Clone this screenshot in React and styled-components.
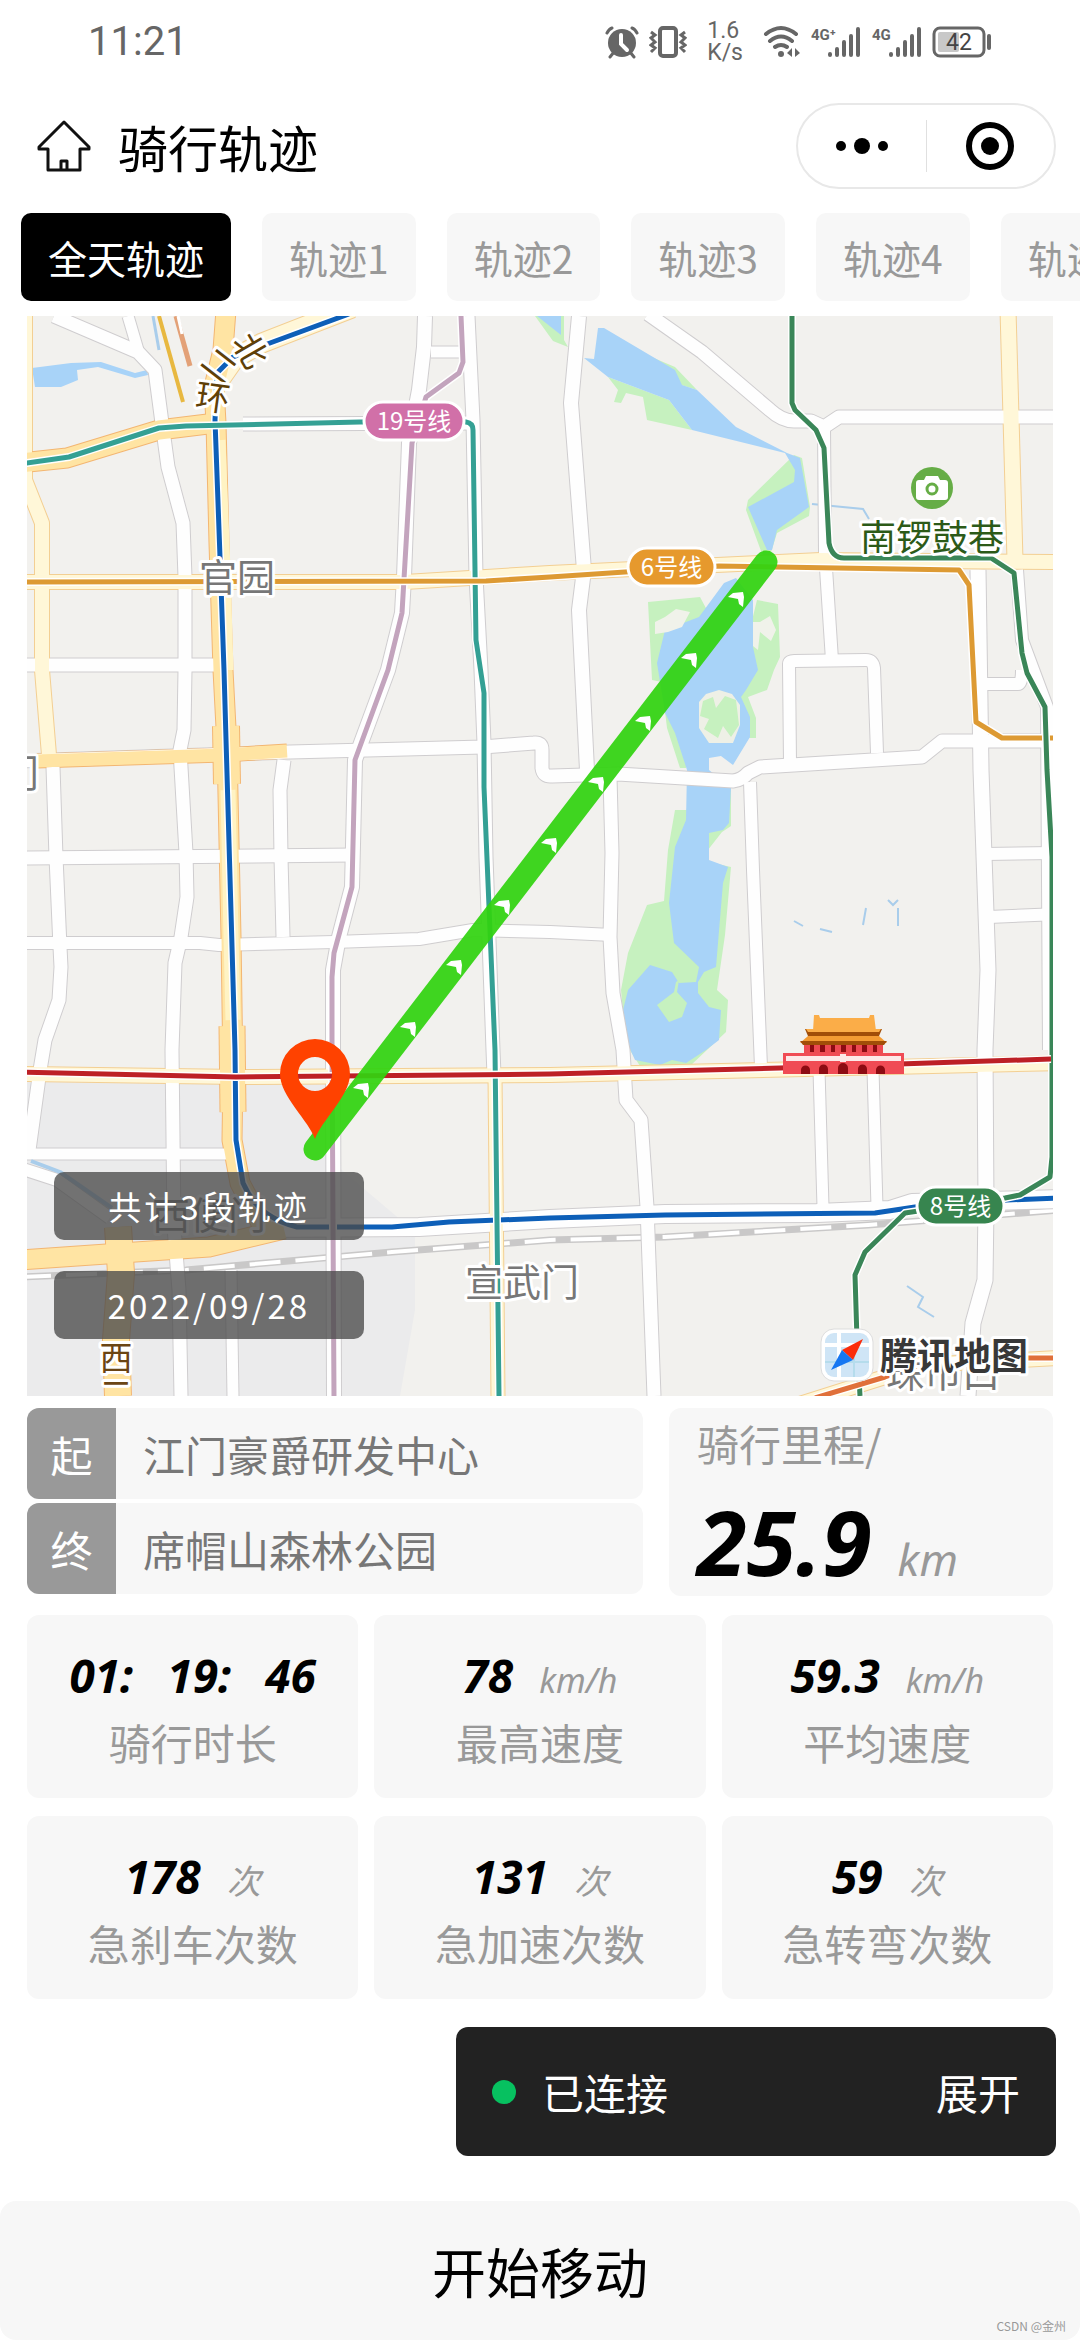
import React from "react";
import styled, { createGlobalStyle } from "styled-components";

const GlobalStyle = createGlobalStyle`
  *, *::before, *::after { box-sizing: border-box; }
  body {
    margin: 0;
    background: #fff;
    color: #000;
    font-family: "Noto Sans CJK SC", "Noto Sans", sans-serif;
  }
  button { font: inherit; color: inherit; border: 0; margin: 0; padding: 0; background: none; cursor: pointer; }
`;

const Page = styled.div`
  display: flex;
  flex-direction: column;
  min-height: 100vh;
  overflow: hidden;
`;

const StatusBar = styled.div`
  display: flex;
  justify-content: space-between;
  align-items: center;
  height: 84px;
  padding: 0 88px;
  color: #666;
  font-family: Roboto, sans-serif;
`;

const Clock = styled.time`
  font-size: 40px;
  line-height: 48px;
`;

const StatusIcons = styled.div`
  display: flex;
  align-items: center;
  gap: 10px;
`;

const Speed = styled.span`
  margin: 0 10px;
  font-size: 23px;
  line-height: 22px;
`;

const SignalGroup = styled.span`
  display: flex;
  gap: 11px;
`;

const Header = styled.header`
  display: flex;
  align-items: center;
  gap: 26px;
  height: 124px;
  padding: 0 24px 0 36px;
`;

const IconButton = styled.button`
  display: flex;
  align-items: center;
  justify-content: center;
  ${(p) => p.$grow && "flex: 1;"}
`;

const Title = styled.h1`
  flex: 1;
  margin: 0;
  font-size: 50px;
  font-weight: 400;
  line-height: 72px;
`;

const Capsule = styled.div`
  display: flex;
  align-items: center;
  width: 260px;
  height: 86px;
  border: 2px solid #e8e8e8;
  border-radius: 43px;
`;

const CapsuleDivider = styled.span`
  width: 1px;
  height: 52px;
  background: #e0e0e0;
`;

const Tabs = styled.nav`
  display: flex;
  gap: 31px;
  margin-top: 5px;
  padding-left: 21px;
  overflow: hidden;
`;

const Tab = styled.button`
  flex: none;
  height: 88px;
  padding: 0 27px;
  border-radius: 10px;
  font-size: 39px;
  line-height: 56px;
  color: ${(p) => (p.$active ? "#fff" : "#999")};
  background: ${(p) => (p.$active ? "#000" : "#f7f7f7")};
`;

const Content = styled.main`
  display: flex;
  flex-direction: column;
  margin-top: 15px;
  padding: 0 27px;
`;

const MapPanel = styled.section`
  position: relative;
`;

const MapCanvas = styled.svg`
  display: block;
  width: 100%;
  height: auto;
  background: #f2f1ee;
`;

const MapOverlay = styled.div`
  position: absolute;
  left: 27px;
  bottom: 57px;
  display: flex;
  flex-direction: column;
  gap: 31px;
  width: 310px;
`;

const MapTag = styled.div`
  height: 68px;
  border-radius: 10px;
  background: rgba(74, 74, 74, 0.78);
  color: #fff;
  font-size: 33px;
  line-height: 68px;
  letter-spacing: 3px;
  text-align: center;
`;

const Summary = styled.section`
  display: grid;
  grid-template-columns: 616fr 384fr;
  gap: 26px;
  margin-top: 12px;
`;

const Stops = styled.div`
  display: flex;
  flex-direction: column;
  gap: 4px;
`;

const Stop = styled.div`
  display: flex;
  align-items: center;
  height: 91px;
  border-radius: 12px;
  overflow: hidden;
  background: #f7f7f7;
  color: #777;
  font-size: 42px;
  line-height: 60px;
`;

const StopTag = styled.span`
  display: flex;
  align-items: center;
  justify-content: center;
  width: 89px;
  height: 100%;
  margin-right: 27px;
  background: #999;
  color: #fff;
`;

const Distance = styled.div`
  display: flex;
  flex-direction: column;
  justify-content: space-between;
  height: 188px;
  padding: 5px 28px 7px;
  border-radius: 12px;
  background: #f7f7f7;
  color: #999;
  font-size: 42px;
  line-height: 60px;
`;

const Reading = styled.div`
  display: flex;
  align-items: baseline;
  justify-content: ${(p) => (p.$large ? "flex-start" : "center")};
  gap: ${(p) => (p.$clock ? 34 : 26)}px;
  height: ${(p) => (p.$large ? 96 : 56)}px;
  line-height: ${(p) => (p.$large ? 96 : 56)}px;
  white-space: nowrap;
`;

const Value = styled.span`
  font-family: "Noto Sans", "Noto Sans CJK SC", sans-serif;
  font-size: ${(p) => (p.$large ? 90 : 46)}px;
  font-weight: 700;
  font-style: italic;
  color: #000;
`;

const Unit = styled.span`
  font-family: "Noto Sans", "Noto Sans CJK SC", sans-serif;
  font-size: ${(p) => (p.$large ? 44 : 34)}px;
  font-style: italic;
  color: #999;
`;

const Metrics = styled.section`
  display: grid;
  grid-template-columns: repeat(3, 1fr);
  gap: 18px 16px;
  margin-top: 19px;
`;

const Metric = styled.div`
  display: flex;
  flex-direction: column;
  gap: 11px;
  height: 183px;
  padding-top: 32px;
  border-radius: 12px;
  background: #f7f7f7;
`;

const MetricLabel = styled.div`
  color: #999;
  font-size: 42px;
  line-height: 56px;
  text-align: center;
`;

const Toast = styled.div`
  display: flex;
  align-items: center;
  align-self: flex-end;
  width: 600px;
  height: 129px;
  margin: 28px 24px 45px;
  padding: 0 36px;
  border-radius: 12px;
  background: #222;
  color: #fff;
  font-size: 42px;
  line-height: 60px;
`;

const Dot = styled.span`
  width: 24px;
  height: 24px;
  margin-right: 26px;
  border-radius: 50%;
  background: #07c160;
`;

const ToastText = styled.span`
  flex: 1;
`;

const Footer = styled.footer`
  position: relative;
  margin-top: auto;
`;

const StartButton = styled.button`
  display: block;
  width: 100%;
  height: 139px;
  border-radius: 16px;
  background: #f7f7f7;
  font-size: 54px;
  line-height: 76px;
`;

const Watermark = styled.small`
  position: absolute;
  right: 14px;
  bottom: 5px;
  color: #999;
  font-size: 12px;
  line-height: 18px;
`;

const MapText = styled.text`
  font-size: ${(p) => p.$size || 38}px;
  font-weight: ${(p) => (p.$bold ? 700 : 400)};
  fill: ${(p) => p.$fill || "#777"};
  stroke: ${(p) => (p.$plain ? "none" : "#fff")};
  stroke-width: 6px;
  stroke-linejoin: round;
  paint-order: stroke;
`;

const WHITE = ["#fefefe", "#cfcdcf"];
const CREAM = ["#fff7d8", "#f3cf93"];
const AMBER = ["#ffe4a3", "#f3b672"];

const ROADS = [
  ["M54 316L138 352L155 370L162 423L168 467L183 523L185 577V670L184 730L180 750L186 853L187 897L181 937L175 963L172 1050L174 1227L179 1290L181 1396", 13, WHITE],
  ["M128 316L138 350", 11, WHITE],
  ["M425 316L424 347L419 390L409 443L404 577L402 613L388 670L361 743L355 760L352 887L339 937L333 970V1050L334 1396", 14, WHITE],
  ["M468 316L473 420L476 577L481 670L484 743L486 857L493 1050L494 1075", 13, WHITE],
  ["M431 352H466", 11, WHITE],
  ["M243 424L473 423", 13, WHITE],
  ["M20 665H216", 13, WHITE],
  ["M20 761L290 752L483 747L534 743Q542 742 542 750V768Q543 777 552 776L618 774L733 781Q742 780 748 773L760 767L922 757L942 741H1060", 13, WHITE],
  ["M53 767L56 857L60 947L61 967L59 1000L45 1040L40 1070L29 1150", 13, WHITE],
  ["M20 858L355 855", 13, WHITE],
  ["M20 943H200L219 945L334 942L419 939L473 930L550 932L612 935", 12, WHITE],
  ["M284 760L280 790L281 857L283 937", 13, WHITE],
  ["M20 1154H226", 11, WHITE],
  ["M20 1168L57 1180L110 1218", 12, WHITE],
  ["M231 1270L233 1396", 11, WHITE],
  ["M579 316L571 403L584 570L579 610L582 670L587 770", 14, WHITE],
  ["M610 777L612 853L610 937L613 993L623 1050L626 1100L641 1120L647 1207L654 1396", 13, WHITE],
  ["M648 314L702 352L770 410Q782 421 794 421H811L824 427L839 417H1060", 13, WHITE],
  ["M824 427L825 553L832 660", 12, WHITE],
  ["M790 763L789 664Q789 661 794 661L866 660Q873 660 874 668L877 753", 12, WHITE],
  ["M750 782L753 870L761 1067", 12, WHITE],
  ["M978 570L981 770L988 970L985 1050L986 1207L985 1280L973 1323L968 1396", 15, WHITE],
  ["M1017 570L1022 640L1047 707L1049 1050", 12, WHITE],
  ["M985 684H1018Q1022 684 1022 670", 12, WHITE],
  ["M985 854L1060 853", 12, WHITE],
  ["M989 917L1060 914", 12, WHITE],
  ["M819 1070L823 1207", 11, WHITE],
  ["M873 1070L877 1207", 11, WHITE],
  ["M263 1228L419 1227L550 1219L665 1214L817 1213L890 1210L912 1203L1060 1199", 18, WHITE],
  ["M25 316V480L42 523V670L49 755", 14, CREAM],
  ["M20 582H405L550 573L821 560L1060 562", 14, CREAM],
  ["M1008 310L1015 560", 15, CREAM],
  ["M20 1074L240 1077L550 1075L1060 1063", 14, CREAM],
  ["M495 1075L498 1396", 13, CREAM],
  ["M790 1407L885 1377L919 1365L1060 1358", 14, CREAM],
  ["M221 378L235 358L262 343L352 308", 19, CREAM],
  ["M226 310L223 350L214 387L216 423L219 543L223 670L227 747L231 937L233 1073L232 1140L240 1183L263 1227", 19, AMBER],
  ["M226 726L227 784", 26, AMBER],
  ["M232 1026L233 1112", 25, AMBER],
  ["M20 463L67 458L159 430L216 423", 19, AMBER],
  ["M37 761L223 755L287 751", 13, AMBER],
  ["M20 1260L121 1253L209 1247L284 1229", 19, AMBER],
  ["M118 1227L121 1273L116 1340L118 1396", 26, AMBER],
];

const SUBWAYS = [
  ["M349 314L270 343L233 357L217 373L215 420L220 557L224 670L235 1050L236 1140L243 1183Q252 1203 266 1213T297 1227H392L449 1222L550 1218L665 1215L875 1213L915 1207L1007 1200L1060 1198", "#0d5fb8"],
  ["M20 464L69 457L159 428L186 426L360 422H466Q473 423 473 430L476 640L484 693V787L495 1050L499 1396", "#34a094"],
  ["M461 316L463 362L459 373L426 397L412 443L402 613L388 670L355 760L352 887L334 953L332 977V1050L334 1396", "#c3a4bd"],
  ["M20 582L486 581L550 577L625 572L719 566L959 570L969 585L976 722L1002 738H1060", "#dd9a33"],
  ["M792 316V403L795 410L816 430L824 448L829 543Q832 558 844 558H991L1014 573L1022 653L1027 673L1045 707L1047 770L1052 857V1157L1050 1177L1020 1195L1005 1198L905 1213L865 1252L855 1275L857 1340L860 1396", "#3a8658"],
  ["M20 1072L236 1077L550 1074L780 1068L1051 1059", "#bd2026"],
  ["M815 1398L885 1377L919 1365L980 1358H1060", "#e0703a"],
];

const PARKS = [
  "M608 377L618 390L614 402L621 403L626 393L643 397L647 420L692 430L669 400Z",
  "M642 353L675 367L697 390L675 383Z",
  "M535 316H564V340L568 347L553 341Z",
  "M648 602L700 597L708 612L720 600L700 640L665 640L660 670L667 728L680 768L686 768L700 690L652 680Z",
  "M757 600L778 604L780 657L774 670L767 690L748 697L756 718V738L748 738L735 690Z",
  "M794 455L802 458L810 507L809 516L777 533L768 562L765 562L746 510L748 500Z",
  "M675 810H686L731 788V826L722 832L700 860L731 867L725 935L717 990L728 1000L726 1032L690 1066H640L626 1044L621 990L628 953L647 905L664 901L668 850Z",
];

const WATER = [
  "M32 368L71 363L101 362L135 373L147 370L148 375L135 378L98 367L77 370L78 380L61 387H35Z",
  "M537 316H561V335Z",
  "M598 328H604L675 370L682 385L697 390L736 427L787 453L800 458L809 507L777 530L772 550H767L748 507L794 482L795 470L785 453L692 430L669 400L608 377L584 358L594 359Z",
  "M724 583L736 578L753 600V647L758 670L746 690L741 697L750 717V737L733 765L721 756L709 758V770L731 788L729 823L723 830L709 833V860L728 867L723 883L716 967L704 972L698 982V993L709 1007L721 1010L719 1040L706 1050L686 1063L672 1060L660 1065L635 1060L626 1040L623 1010L628 990L650 965L672 972L679 983L696 982L699 967L674 943L669 903L675 847L686 820L687 770L675 733L665 713L657 663L665 630L699 617Z",
];

const ARROWS = [[736, 598], [689, 659], [643, 722], [596, 783], [549, 844], [502, 906], [454, 966], [408, 1028], [361, 1089]];

function LinePill({ x, y, width, color, children }) {
  return (
    <g>
      <rect x={x} y={y} width={width} height="38" rx="19" fill={color} stroke="#fff" strokeWidth="3" />
      <MapText x={x + width / 2} y={y + 28} $size={24} $fill="#fff" $plain textAnchor="middle">{children}</MapText>
    </g>
  );
}

function Gate() {
  return (
    <g>
      <path d="M814 1015h5l1 3h49l1-3h4l2 16h-63z" fill="#fbad48" />
      <path d="M805 1029h77l-3 7h-71z" fill="#a14e08" />
      <path d="M806 1029h75l-2 3h-71z" fill="#fbad48" />
      <path d="M808 1036h71l8 7h-87z" fill="#f39b33" />
      <path d="M800 1041h87l-3 4h-81z" fill="#a14e08" />
      <path d="M804 1045h79v9h-79z" fill="#ee4a52" />
      <path d="M810 1045h4v7h-4zM820 1045h5v7h-5zM831 1045h4v7h-4zM841 1045h5v7h-5zM852 1045h4v7h-4zM862 1045h5v7h-5zM873 1045h4v7h-4z" fill="#8d0b12" />
      <path d="M783 1053h121v21H783z" fill="#f04b54" />
      <path d="M786 1056h115v5H786zM840 1054h6v8h-6z" fill="#fde8e8" />
      <path d="M801 1074v-4a4 4 0 0 1 9 0v4zM819 1074v-5a4 4 0 0 1 9 0v5zM838 1074v-6a5 5 0 0 1 10 0v6zM858 1074v-5a4 4 0 0 1 9 0v5zM876 1074v-4a4 4 0 0 1 9 0v4z" fill="#8d0b12" />
    </g>
  );
}

function RideMap() {
  return (
    <MapCanvas viewBox="27 316 1026 1080" role="img" aria-label="骑行轨迹地图">
      <path d="M27 1075H330V1160L415 1232V1310L400 1396H27Z" fill="#ebebec" />
      {PARKS.map((d) => <path key={d} d={d} fill="#c6f1bf" />)}
      {WATER.map((d) => <path key={d} d={d} fill="#a8d3f8" />)}
      <path d="M699 702L706 694L719 690L732 694L740 705V725L733 743L709 743L699 728Z" fill="#eef0e6" />
      <path d="M703 701L713 697L716 708L725 696L736 700L739 725L731 737L723 726L718 738L704 729L709 719L700 716Z" fill="#c6f1bf" />
      <path d="M665 617L676 609L690 612L682 627L668 632L655 634V622ZM760 622L770 616L776 630L771 641L760 632L758 650L753 646V622Z" fill="#f0f2ea" />
      <path d="M679 980L677 992L687 1003L682 1017L669 1022L657 1005L674 992L676 982Z" fill="#c6f1bf" />
      <g fill="none" stroke="#a9cdeb" strokeWidth="2">
        <path d="M812 504L863 509L869 519M794 921L803 926M820 929L832 932M866 908L863 925M888 900L893 905L898 900M898 908V926M907 1286L923 1297L918 1307L934 1317" />
        <path d="M153 316L159 350" strokeWidth="3" />
      </g>
      <g fill="none">
        <path d="M20 1277L186 1270L392 1252L550 1240L665 1237L868 1225L1060 1210" stroke="#c9c8c8" strokeWidth="7" />
        <path d="M20 1277L186 1270L392 1252L550 1240L665 1237L868 1225L1060 1210" stroke="#fff" strokeWidth="4" strokeDasharray="31 15" />
      </g>
      <g fill="none" strokeLinejoin="round">
        {ROADS.map(([d, w, c]) => <path key={d} d={d} stroke={c[1]} strokeWidth={w + 2} />)}
        {ROADS.map(([d, w, c]) => <path key={d} d={d} stroke={c[0]} strokeWidth={w} />)}
        <path d="M31 1161L60 1172L112 1208" stroke="#a9cdeb" strokeWidth="4" />
        <path d="M228 790L231 937L233 1020" stroke="#fff3c4" strokeWidth="15" />
        <path d="M222 440L227 570L230 670" stroke="#fff3c4" strokeWidth="7" />
        <path d="M159 316L183 402" stroke="#e8b840" strokeWidth="4" />
        <path d="M176 316L190 366" stroke="#e3a177" strokeWidth="5" />
        <path d="M178 316L182 334" stroke="#fff" strokeWidth="3" />
        {SUBWAYS.map(([d, color]) => (
          <g key={d}>
            <path d={d} stroke="#fff" strokeWidth="8" />
            <path d={d} stroke={color} strokeWidth="5" />
          </g>
        ))}
      </g>

      <g textAnchor="middle">
        <g transform="translate(251 350) rotate(60)"><MapText y="13" $size={34} $fill="#5f4008">北</MapText></g>
        <g transform="translate(220 365) rotate(38)"><MapText y="13" $size={34} $fill="#5f4008">二</MapText></g>
        <g transform="translate(213 397) rotate(8)"><MapText y="13" $size={34} $fill="#5f4008">环</MapText></g>
        <MapText x="237" y="591">官园</MapText>
        <MapText x="522" y="1296">宣武门</MapText>
        <MapText x="209" y="1229">西便门</MapText>
        <MapText x="943" y="1387">珠市口</MapText>
        <MapText x="20" y="787">门</MapText>
        <MapText x="116" y="1370" $size={33} $fill="#6b4514">西</MapText>
        <MapText x="116" y="1405" $size={33} $fill="#6b4514">二</MapText>
        <MapText x="932" y="551" $size={36} $fill="#2c5a18">南锣鼓巷</MapText>
      </g>

      <circle cx="932" cy="488" r="21" fill="#66ad46" />
      <path d="M919 480h5l2-4h12l2 4h5q3 0 3 3v14q0 3-3 3h-26q-3 0-3-3v-14q0-3 3-3z" fill="#fff" />
      <circle cx="932" cy="489" r="5" fill="none" stroke="#66ad46" strokeWidth="3" />

      <LinePill x={364} y={402} width={100} color="#d170a8">19号线</LinePill>
      <LinePill x={628} y={548} width={87} color="#e6992d">6号线</LinePill>
      <LinePill x={917} y={1187} width={87} color="#37854f">8号线</LinePill>
      <Gate />

      <path d="M315 1149L766 562" stroke="#31d310" strokeOpacity="0.93" strokeWidth="23" strokeLinecap="round" />
      {ARROWS.map(([x, y]) => (
        <path key={x} transform={`translate(${x} ${y})`} d="M-8 -1L-3 -5L7 -6L8 -1L7 9L3 6L2 1Z" fill="#fff" />
      ))}
      <path d="M315 1139C309 1121 280 1096 280 1074A35 35 0 0 1 350 1074C350 1096 321 1121 315 1139ZM315 1057A17 17 0 1 0 315 1091A17 17 0 1 0 315 1057Z" fill="#ff4200" fillRule="evenodd" />

      <rect x="821" y="1329" width="52" height="52" rx="13" fill="#fff" stroke="#ddd" />
      <rect x="825" y="1333" width="44" height="44" rx="9" fill="#cfe5f6" />
      <path d="M839 1333V1377M825 1345H869" stroke="#fff" strokeWidth="4" />
      <path d="M854 1347V1377M825 1362H869" stroke="#b5dcec" strokeWidth="2" />
      <path d="M863 1339L853 1360L842 1350Z" fill="#fb2c0b" />
      <path d="M831 1370L842 1350L853 1360Z" fill="#1677f2" />
      <MapText x="880" y="1370" $size={37} $fill="#383838" $bold>腾讯地图</MapText>
    </MapCanvas>
  );
}

function AlarmIcon() {
  return (
    <svg width="34" height="34" viewBox="0 0 34 34" aria-hidden="true">
      <circle cx="17" cy="18" r="14" fill="#666" />
      <path d="M2 8Q4 4 7 3M32 8Q30 4 27 3M5 32L9 27M29 32L25 27" stroke="#666" strokeWidth="3" strokeLinecap="round" fill="none" />
      <path d="M16 10V19L22 25" stroke="#fff" strokeWidth="4" strokeLinecap="round" fill="none" />
    </svg>
  );
}

function VibrateIcon() {
  return (
    <svg width="38" height="32" viewBox="0 0 38 32" fill="none" stroke="#666" aria-hidden="true">
      <rect x="11" y="2" width="16" height="28" rx="3" strokeWidth="4" />
      <path d="M2 6L6 9L2 12L6 16L2 19L6 22L2 26M36 6L32 9L36 12L32 16L36 19L32 22L36 26" strokeWidth="3" />
    </svg>
  );
}

function WifiIcon() {
  return (
    <svg width="38" height="34" viewBox="0 0 38 34" fill="none" stroke="#666" strokeWidth="4" strokeLinecap="round" aria-hidden="true">
      <path d="M3 9Q18 -3 33 9M7 16Q18 7 29 16M12 22Q18 18 24 22" />
      <circle cx="18" cy="29" r="3" fill="#666" stroke="none" />
      <path d="M29 23V32L24 28ZM32 23V32L37 28Z" fill="#666" stroke="none" />
    </svg>
  );
}

function SignalIcon({ label }) {
  return (
    <svg width="50" height="34" viewBox="0 0 50 34" aria-label={label}>
      <text x="0" y="15" fontSize="15" fontWeight="700" fill="#666">{label}</text>
      <path d="M19 29V30M26 24V30M33 17V30M40 11V30M47 4V30" stroke="#666" strokeWidth="4" strokeLinecap="round" />
    </svg>
  );
}

function BatteryIcon() {
  return (
    <svg width="60" height="32" viewBox="0 0 60 32" aria-label="电量 42%">
      <rect x="6" y="6" width="21" height="20" rx="2" fill="#c8c8c8" />
      <rect x="2" y="2" width="50" height="28" rx="6" fill="none" stroke="#666" strokeWidth="3" />
      <path d="M57 10V22" stroke="#666" strokeWidth="4" strokeLinecap="round" />
      <text x="27" y="24" fontSize="23" textAnchor="middle" fill="#444">42</text>
    </svg>
  );
}

const TRACKS = ["全天轨迹", "轨迹1", "轨迹2", "轨迹3", "轨迹4", "轨迹5"];

const METRICS = [
  { values: ["01:", "19:", "46"], label: "骑行时长" },
  { values: ["78"], unit: "km/h", label: "最高速度" },
  { values: ["59.3"], unit: "km/h", label: "平均速度" },
  { values: ["178"], unit: "次", label: "急刹车次数" },
  { values: ["131"], unit: "次", label: "急加速次数" },
  { values: ["59"], unit: "次", label: "急转弯次数" },
];

export default function App() {
  return (
    <Page>
      <GlobalStyle />
      <StatusBar>
        <Clock>11:21</Clock>
        <StatusIcons>
          <AlarmIcon />
          <VibrateIcon />
          <Speed>1.6<br />K/s</Speed>
          <WifiIcon />
          <SignalGroup>
            <SignalIcon label="4G⁺" />
            <SignalIcon label="4G" />
          </SignalGroup>
          <BatteryIcon />
        </StatusIcons>
      </StatusBar>

      <Header>
        <IconButton aria-label="首页">
          <svg width="56" height="54" viewBox="0 0 56 54" fill="none" stroke="#111" strokeWidth="3" strokeLinejoin="round">
            <path d="M28 3L53 28V30H44V51H12V30H3V28ZM25 51V42H31V51" />
          </svg>
        </IconButton>
        <Title>骑行轨迹</Title>
        <Capsule>
          <IconButton $grow aria-label="更多">
            <svg width="52" height="20" viewBox="0 0 52 20">
              <circle cx="5" cy="10" r="5" /><circle cx="26" cy="10" r="8" /><circle cx="47" cy="10" r="5" />
            </svg>
          </IconButton>
          <CapsuleDivider />
          <IconButton $grow aria-label="关闭">
            <svg width="50" height="50" viewBox="0 0 50 50">
              <circle cx="25" cy="25" r="21" fill="none" stroke="#000" strokeWidth="6" />
              <circle cx="25" cy="25" r="9" />
            </svg>
          </IconButton>
        </Capsule>
      </Header>

      <Tabs>
        {TRACKS.map((name, i) => <Tab key={name} $active={i === 0}>{name}</Tab>)}
      </Tabs>

      <Content>
        <MapPanel>
          <RideMap />
          <MapOverlay>
            <MapTag>共计3段轨迹</MapTag>
            <MapTag>2022/09/28</MapTag>
          </MapOverlay>
        </MapPanel>

        <Summary>
          <Stops>
            <Stop><StopTag>起</StopTag>江门豪爵研发中心</Stop>
            <Stop><StopTag>终</StopTag>席帽山森林公园</Stop>
          </Stops>
          <Distance>
            <span>骑行里程/</span>
            <Reading $large>
              <Value $large>25.9</Value>
              <Unit $large>km</Unit>
            </Reading>
          </Distance>
        </Summary>

        <Metrics>
          {METRICS.map(({ values, unit, label }) => (
            <Metric key={label}>
              <Reading $clock={values.length > 1}>
                {values.map((value) => <Value key={value}>{value}</Value>)}
                {unit && <Unit>{unit}</Unit>}
              </Reading>
              <MetricLabel>{label}</MetricLabel>
            </Metric>
          ))}
        </Metrics>
      </Content>

      <Toast>
        <Dot />
        <ToastText>已连接</ToastText>
        <button>展开</button>
      </Toast>

      <Footer>
        <StartButton>开始移动</StartButton>
        <Watermark>CSDN @金州</Watermark>
      </Footer>
    </Page>
  );
}
